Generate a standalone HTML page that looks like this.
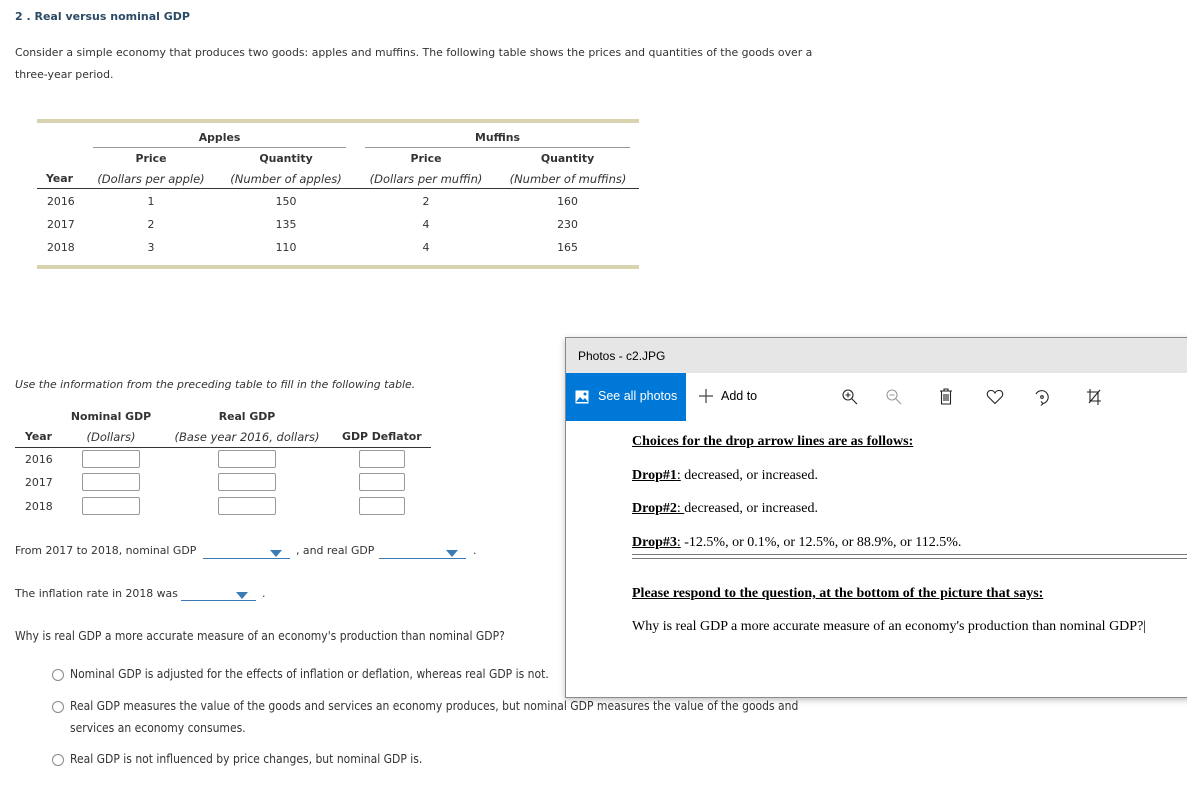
<!DOCTYPE html>
<html><head><meta charset="utf-8"><style>
*{margin:0;padding:0;box-sizing:border-box}
body{width:1187px;height:790px;background:#fff;position:relative;overflow:hidden;font-family:"DejaVu Sans",Verdana,sans-serif;font-size:10.9px;color:#333}
.a{position:absolute;white-space:nowrap}
.c{text-align:center}
.b{font-weight:bold}
.i{font-style:italic}
.box{position:absolute;width:58px;height:18px;border:1px solid #999;border-radius:2px;background:#fff}
.dd{position:absolute;border-bottom:1px solid #3c7ab5;height:14px}
.dd:after{content:"";position:absolute;right:8px;top:5px;border-left:6px solid transparent;border-right:6px solid transparent;border-top:7px solid #3c7ab5}
.cond{font-family:"DejaVu Sans Condensed","DejaVu Sans",sans-serif;font-size:12px;color:#333}
.rad{position:absolute;width:12px;height:12px;border:1px solid #888;border-radius:50%}
.ser{font-family:"Liberation Serif",serif;font-size:14px;color:#000}
.ser u{text-decoration:underline}
</style></head><body>

<div class="a b" style="left:15px;top:10px;color:#2b4a66;font-size:11px">2 . Real versus nominal GDP</div>
<div class="a" style="left:15px;top:46px">Consider a simple economy that produces two goods: apples and muffins. The following table shows the prices and quantities of the goods over a</div>
<div class="a" style="left:15px;top:68px">three-year period.</div>

<div class="a" style="left:37px;top:119px;width:602px;height:4px;background:#d8d4b0"></div>
<div class="a" style="left:37px;top:265px;width:602px;height:4px;background:#d8d4b0"></div>
<div class="a b c" style="left:93px;top:131px;width:253px">Apples</div>
<div class="a b c" style="left:365px;top:131px;width:265px">Muffins</div>
<div class="a" style="left:93px;top:147px;width:253px;height:1px;background:#999"></div>
<div class="a" style="left:365px;top:147px;width:265px;height:1px;background:#999"></div>
<div class="a b c" style="left:93px;top:152px;width:116px">Price</div>
<div class="a b c" style="left:226px;top:152px;width:120px">Quantity</div>
<div class="a b c" style="left:365px;top:152px;width:122px">Price</div>
<div class="a b c" style="left:505px;top:152px;width:125px">Quantity</div>
<div class="a b" style="left:46px;top:172px">Year</div>
<div class="a i c" style="left:90px;top:172px;width:122px;font-size:11.5px">(Dollars per apple)</div>
<div class="a i c" style="left:224px;top:172px;width:124px;font-size:11.5px">(Number of apples)</div>
<div class="a i c" style="left:362px;top:172px;width:128px;font-size:11.5px">(Dollars per muffin)</div>
<div class="a i c" style="left:503px;top:172px;width:130px;font-size:11.5px">(Number of muffins)</div>
<div class="a" style="left:37px;top:188px;width:602px;height:1px;background:#333"></div>
<div class="a" style="left:47px;top:195px">2016</div><div class="a c" style="left:93px;top:195px;width:116px">1</div><div class="a c" style="left:226px;top:195px;width:120px">150</div><div class="a c" style="left:365px;top:195px;width:122px">2</div><div class="a c" style="left:505px;top:195px;width:125px">160</div>
<div class="a" style="left:47px;top:218px">2017</div><div class="a c" style="left:93px;top:218px;width:116px">2</div><div class="a c" style="left:226px;top:218px;width:120px">135</div><div class="a c" style="left:365px;top:218px;width:122px">4</div><div class="a c" style="left:505px;top:218px;width:125px">230</div>
<div class="a" style="left:47px;top:241px">2018</div><div class="a c" style="left:93px;top:241px;width:116px">3</div><div class="a c" style="left:226px;top:241px;width:120px">110</div><div class="a c" style="left:365px;top:241px;width:122px">4</div><div class="a c" style="left:505px;top:241px;width:125px">165</div>

<div class="a i" style="left:15px;top:378px">Use the information from the preceding table to fill in the following table.</div>

<div class="a b c" style="left:70px;top:410px;width:82px">Nominal GDP</div>
<div class="a b c" style="left:168px;top:410px;width:158px">Real GDP</div>
<div class="a b" style="left:25px;top:430px">Year</div>
<div class="a i c" style="left:70px;top:430px;width:82px;font-size:11.5px">(Dollars)</div>
<div class="a i c" style="left:168px;top:430px;width:158px;font-size:11.5px">(Base year 2016, dollars)</div>
<div class="a b" style="left:342px;top:430px">GDP Deflator</div>
<div class="a" style="left:15px;top:447px;width:416px;height:1px;background:#333"></div>
<div class="a" style="left:25px;top:453px">2016</div>
<div class="a" style="left:25px;top:476px">2017</div>
<div class="a" style="left:25px;top:500px">2018</div>
<div class="box" style="left:82px;top:450px"></div><div class="box" style="left:218px;top:450px"></div><div class="box" style="left:359px;top:450px;width:46px"></div>
<div class="box" style="left:82px;top:473px"></div><div class="box" style="left:218px;top:473px"></div><div class="box" style="left:359px;top:473px;width:46px"></div>
<div class="box" style="left:82px;top:497px"></div><div class="box" style="left:218px;top:497px"></div><div class="box" style="left:359px;top:497px;width:46px"></div>

<div class="a" style="left:15px;top:544px">From 2017 to 2018, nominal GDP</div>
<div class="dd" style="left:203px;top:545px;width:87px"></div>
<div class="a" style="left:296px;top:544px">, and real GDP</div>
<div class="dd" style="left:379px;top:545px;width:87px"></div>
<div class="a" style="left:473px;top:544px">.</div>

<div class="a" style="left:15px;top:587px">The inflation rate in 2018 was</div>
<div class="dd" style="left:181px;top:587px;width:75px"></div>
<div class="a" style="left:262px;top:587px">.</div>

<div class="a cond" style="left:15px;top:629px">Why is real GDP a more accurate measure of an economy's production than nominal GDP?</div>
<div class="rad" style="left:52px;top:669px"></div>
<div class="a cond" style="left:70px;top:667px">Nominal GDP is adjusted for the effects of inflation or deflation, whereas real GDP is not.</div>
<div class="rad" style="left:52px;top:701px"></div>
<div class="a cond" style="left:70px;top:699px">Real GDP measures the value of the goods and services an economy produces, but nominal GDP measures the value of the goods and</div>
<div class="a cond" style="left:70px;top:721px">services an economy consumes.</div>
<div class="rad" style="left:52px;top:754px"></div>
<div class="a cond" style="left:70px;top:752px">Real GDP is not influenced by price changes, but nominal GDP is.</div>

<div class="a" style="left:565px;top:337px;width:640px;height:361px;background:#fff;border:1px solid #8a8a8a;box-shadow:0 2px 6px rgba(0,0,0,.25)">
  <div style="position:absolute;left:0;top:0;width:100%;height:35px;background:#e6e6e6"></div>
  <div style="position:absolute;left:12px;top:11px;font-family:'Liberation Sans',sans-serif;font-size:12px;color:#000">Photos - c2.JPG</div>
  <div style="position:absolute;left:0;top:35px;width:120px;height:48px;background:#0078d7"></div>
  <svg style="position:absolute;left:9px;top:52px" width="14" height="14" viewBox="0 0 14 14"><rect x="0.5" y="0.5" width="13" height="13" fill="#fff"/><path d="M1 12 L5 7 L8 10 L10 8 L13 12Z" fill="#0078d7"/><circle cx="10" cy="4" r="1.5" fill="#0078d7"/></svg>
  <div style="position:absolute;left:32px;top:51px;font-family:'Liberation Sans',sans-serif;font-size:12.5px;color:#fff">See all photos</div>
  <svg style="position:absolute;left:132px;top:50px" width="16" height="16"><path d="M8 1V15M1 8H15" stroke="#444" stroke-width="1.2"/></svg>
  <div style="position:absolute;left:155px;top:51px;font-family:'Liberation Sans',sans-serif;font-size:12.5px;color:#000">Add to</div>
  <svg style="position:absolute;left:275px;top:50px" width="18" height="18" fill="none" stroke="#222" stroke-width="1.1"><circle cx="7" cy="7" r="5"/><path d="M11 11L16 16M4.5 7H9.5M7 4.5V9.5"/></svg>
  <svg style="position:absolute;left:319px;top:50px" width="18" height="18" fill="none" stroke="#999" stroke-width="1.1"><circle cx="7" cy="7" r="5"/><path d="M11 11L16 16M4.5 7H9.5"/></svg>
  <svg style="position:absolute;left:373px;top:50px" width="14" height="18" fill="none" stroke="#222" stroke-width="1.1"><path d="M1 3H13M5 3V1H9V3M2.5 3V16H11.5V3M5 6V13M7 6V13M9 6V13"/></svg>
  <svg style="position:absolute;left:420px;top:51px" width="18" height="16" fill="none" stroke="#222" stroke-width="1.1"><path d="M9 14.5L2.5 8C0 5.5 1.5 1.5 5 1.5C7 1.5 8.5 3 9 4C9.5 3 11 1.5 13 1.5C16.5 1.5 18 5.5 15.5 8Z"/></svg>
  <svg style="position:absolute;left:467px;top:50px" width="18" height="18" fill="none" stroke="#222" stroke-width="1.1"><path d="M3 6A6.5 6.5 0 1 1 10 15.5M10 15.5L8 13.5M10 15.5L8 17.5"/><circle cx="9" cy="9" r="1.3"/></svg>
  <svg style="position:absolute;left:520px;top:50px" width="16" height="18" fill="none" stroke="#222" stroke-width="1.1"><path d="M4 1V13H15M1 4H12V17M3 15L14 2"/></svg>
  <div class="ser" style="position:absolute;left:66px;top:96px"><u><b>Choices for the drop arrow lines are as follows:</b></u></div>
  <div class="ser" style="position:absolute;left:66px;top:130px"><u><b>Drop#1</b>:</u> decreased, or increased.</div>
  <div class="ser" style="position:absolute;left:66px;top:163px"><u><b>Drop#2</b>: </u>decreased, or increased.</div>
  <div class="ser" style="position:absolute;left:66px;top:197px"><u><b>Drop#3</b>:</u> -12.5%, or 0.1%, or 12.5%, or 88.9%, or 112.5%.</div>
  <div style="position:absolute;left:66px;top:216px;width:560px;height:5px;border-top:1px solid #777;border-bottom:1px solid #777"></div>
  <div class="ser" style="position:absolute;left:66px;top:248px"><u><b>Please respond to the question, at the bottom of the picture that says:</b></u></div>
  <div class="ser" style="position:absolute;left:66px;top:281px">Why is real GDP a more accurate measure of an economy's production than nominal GDP?|</div>
</div>
</body></html>
